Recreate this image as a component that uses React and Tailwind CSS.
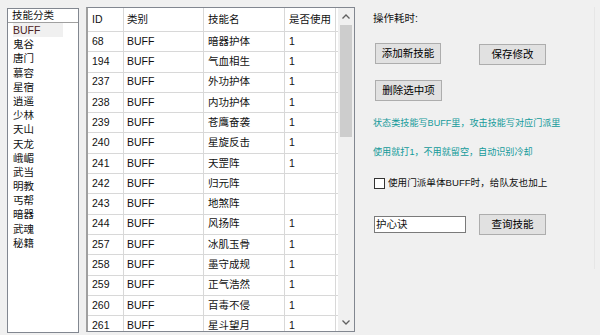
import React from 'react';

const categories = ['BUFF', '鬼谷', '唐门', '慕容', '星宿', '逍遥', '少林', '天山', '天龙', '峨嵋', '武当', '明教', '丐帮', '暗器', '武魂', '秘籍'];

const rows = [
  ['68', 'BUFF', '暗器护体', '1'],
  ['194', 'BUFF', '气血相生', '1'],
  ['237', 'BUFF', '外功护体', '1'],
  ['238', 'BUFF', '内功护体', '1'],
  ['239', 'BUFF', '苍鹰奋袭', '1'],
  ['240', 'BUFF', '星旋反击', '1'],
  ['241', 'BUFF', '天罡阵', '1'],
  ['242', 'BUFF', '归元阵', ''],
  ['243', 'BUFF', '地煞阵', ''],
  ['244', 'BUFF', '风扬阵', '1'],
  ['257', 'BUFF', '冰肌玉骨', '1'],
  ['258', 'BUFF', '墨守成规', '1'],
  ['259', 'BUFF', '正气浩然', '1'],
  ['260', 'BUFF', '百毒不侵', '1'],
  ['261', 'BUFF', '星斗望月', '1'],
];

const font = { fontFamily: '"Liberation Sans", "Noto Sans CJK SC", sans-serif' };

function Btn({ children, className = '' }) {
  return (
    <button className={`h-[21px] bg-[#e1e1e1] border border-[#adadad] text-[10.5px] leading-none text-black flex items-center justify-center ${className}`}>
      {children}
    </button>
  );
}

export default function App() {
  return (
    <div className="w-[600px] h-[335px] bg-[#f0f0f0] overflow-hidden relative text-[10.5px] text-[#111]" style={font}>
      <div className="flex pl-[7px] pt-[7px]">
        {/* 技能分类 list */}
        <div className="w-[72px] h-[325px] mt-[1px] bg-white border border-[#828790] flex flex-col">
          <div className="h-[14px] border-b border-[#a0a0a0] bg-white leading-[13px] pl-[4px]">技能分类</div>
          <div>
            {categories.map((c, i) => (
              <div key={c} className="h-[14.2px] leading-[14.2px] pl-[5px] flex">
                <span className={i === 0 ? 'bg-[#f0f0f0] w-[50px] text-[#4a2222]' : ''}>{c}</span>
              </div>
            ))}
          </div>
        </div>

        {/* table */}
        <div className="ml-[7px] w-[269px] h-[325px] bg-white border border-[#828790] border-l-2 border-l-[#a0a0a0] flex overflow-hidden">
          <div className="w-[251px] flex flex-col">
            <div className="flex h-[24px] shrink-0 border-b border-[#d8d8d8] items-center">
              <div className="w-[36px] h-full pl-[4px] flex items-center border-r border-[#d8d8d8]">ID</div>
              <div className="w-[80px] h-full pl-[3px] flex items-center border-r border-[#d8d8d8]">类别</div>
              <div className="w-[81px] h-full pl-[4px] flex items-center border-r border-[#d8d8d8]">技能名</div>
              <div className="w-[51px] h-full pl-[4px] flex items-center border-r border-[#d8d8d8] whitespace-nowrap">是否使用</div>
            </div>
            {rows.map((r) => (
              <div key={r[0]} className="flex h-[20.3px] shrink-0 border-b border-[#d8d8d8]">
                <div className="w-[36px] h-full pl-[4px] flex items-center border-r border-[#d8d8d8]">{r[0]}</div>
                <div className="w-[80px] h-full pl-[3px] flex items-center border-r border-[#d8d8d8]">{r[1]}</div>
                <div className="w-[81px] h-full pl-[4px] flex items-center border-r border-[#d8d8d8]">{r[2]}</div>
                <div className="w-[51px] h-full pl-[4px] flex items-center border-r border-[#d8d8d8]">{r[3]}</div>
              </div>
            ))}
          </div>
          {/* scrollbar */}
          <div className="w-[16px] ml-auto bg-[#f0f0f0] flex flex-col items-center">
            <div className="h-[17px] w-full flex items-center justify-center">
              <svg width="8" height="5" viewBox="0 0 8 5"><path d="M0.5 4.5 L4 1 L7.5 4.5" fill="none" stroke="#606060" strokeWidth="1.3" /></svg>
            </div>
            <div className="w-[12px] h-[112px] bg-[#cdcdcd]" />
            <div className="flex-1" />
            <div className="h-[17px] w-full flex items-center justify-center">
              <svg width="8" height="5" viewBox="0 0 8 5"><path d="M0.5 0.5 L4 4 L7.5 0.5" fill="none" stroke="#606060" strokeWidth="1.3" /></svg>
            </div>
          </div>
        </div>

        {/* right panel */}
        <div className="ml-[18px] w-[222px] h-[262px] flex flex-col border-r border-[#e6e6e6]">
          <div className="h-[16px] leading-[16px] mt-[3px]">操作耗时:</div>
          <div className="flex mt-[17px] ml-[2px]">
            <Btn className="w-[66px]">添加新技能</Btn>
            <Btn className="w-[67px] ml-[38px] mt-[1px]">保存修改</Btn>
          </div>
          <div className="flex mt-[15px] ml-[2px]">
            <Btn className="w-[67px]">删除选中项</Btn>
          </div>
          <div className="h-[16px] leading-[16px] mt-[14px] text-[#139a9a] text-[9.1px] whitespace-nowrap">状态类技能写BUFF里，攻击技能写对应门派里</div>
          <div className="h-[16px] leading-[16px] mt-[13px] text-[#139a9a] text-[9.1px] whitespace-nowrap">使用就打1，不用就留空，自动识别冷却</div>
          <div className="flex items-center mt-[15px] h-[16px]">
            <div className="w-[11px] h-[11px] border border-[#333] bg-white ml-[1px]" />
            <span className="ml-[3px] whitespace-nowrap text-[9.6px]">使用门派单体BUFF时，给队友也加上</span>
          </div>
          <div className="flex items-center mt-[23px]">
            <div className="w-[92px] h-[17px] ml-[1px] bg-white border border-[#7a7a7a] leading-[15px] pl-[1px]">护心诀</div>
            <Btn className="w-[67px] h-[21px] ml-[13px]">查询技能</Btn>
          </div>
        </div>
      </div>
    </div>
  );
}
